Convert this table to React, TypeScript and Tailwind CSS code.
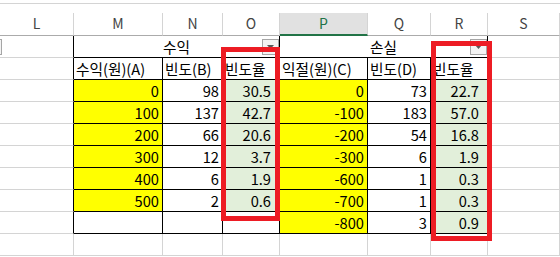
import React from 'react';

type Align = 'l' | 'r' | 'rp' | 'c';

type Cell = {
  t?: string;
  span?: 1 | 3;
  bg?: string;
  align?: Align;
  b?: boolean;
  dd?: 'right' | 'sliver';
};

const Y = 'bg-[#ffff00]';
const G = 'bg-[#e2efda]';

const letters = ['L', 'M', 'N', 'O', 'P', 'Q', 'R', 'S'];

const mRows: string[] = ['0', '100', '200', '300', '400', '500'];
const nRows: string[] = ['98', '137', '66', '12', '6', '2'];
const oRows: string[] = ['30.5', '42.7', '20.6', '3.7', '1.9', '0.6'];
const pRows: string[] = ['0', '-100', '-200', '-300', '-600', '-700'];
const qRows: string[] = ['73', '183', '54', '6', '1', '1'];
const rRows: string[] = ['22.7', '57.0', '16.8', '1.9', '0.3', '0.3'];

const rows: Cell[][] = [
  [
    { dd: 'sliver' },
    { t: '수익', span: 3, align: 'c', b: true, dd: 'right' },
    { t: '손실', span: 3, align: 'c', b: true, dd: 'right' },
    {},
  ],
  [
    {},
    { t: '수익(원)(A)', align: 'l', b: true },
    { t: '빈도(B)', align: 'l', b: true },
    { t: '빈도율', align: 'l', b: true },
    { t: '익절(원)(C)', align: 'l', b: true },
    { t: '빈도(D)', align: 'l', b: true },
    { t: '빈도율', align: 'l', b: true },
    {},
  ],
  ...mRows.map((_, i): Cell[] => [
    {},
    { t: mRows[i], align: 'r', b: true, bg: Y },
    { t: nRows[i], align: 'r', b: true },
    { t: oRows[i], align: 'rp', b: true, bg: G },
    { t: pRows[i], align: 'r', b: true, bg: Y },
    { t: qRows[i], align: 'r', b: true },
    { t: rRows[i], align: 'rp', b: true, bg: G },
    {},
  ]),
  [
    {},
    { b: true },
    { b: true },
    { b: true },
    { t: '-800', align: 'r', b: true, bg: Y },
    { t: '3', align: 'r', b: true },
    { t: '0.9', align: 'rp', b: true, bg: G },
    {},
  ],
  [{}, {}, {}, {}, {}, {}, {}, {}],
];

function startCols(row: Cell[]): number[] {
  const out: number[] = [];
  let c = 0;
  for (const cell of row) {
    out.push(c);
    c += cell.span ?? 1;
  }
  return out;
}

function cellAt(row: Cell[] | undefined, col: number): Cell | undefined {
  if (!row) return undefined;
  const s = startCols(row);
  for (let i = 0; i < row.length; i++) {
    if (col >= s[i] && col < s[i] + (row[i].span ?? 1)) return row[i];
  }
  return undefined;
}

function Dropdown() {
  return (
    <div className="absolute right-0 top-[3px] w-[17px] h-[16px] border border-[#a6a6a6] bg-[#f3f3f3] flex items-center justify-center">
      <svg width="7" height="4" viewBox="0 0 7 4">
        <path d="M0 0h7L3.5 4z" fill="#595959" />
      </svg>
    </div>
  );
}

function Sliver() {
  return (
    <div className="absolute left-[-15px] top-[3px] w-[17px] h-[16px] border border-[#a6a6a6] bg-[#f3f3f3]" />
  );
}

const alignCls: Record<Align, string> = {
  l: 'justify-start pl-[2px]',
  r: 'justify-end pr-[3px]',
  rp: 'justify-end pr-[8px]',
  c: 'justify-center',
};

export default function App() {
  return (
    <div className="relative w-[560px] h-[257px] overflow-hidden bg-white font-['Noto_Sans_CJK_KR',sans-serif] text-black">
      <div className="h-[3px]" />
      <div className="h-px bg-[#d4d4d4]" />
      <div className="h-[9px]" />
      {/* column header */}
      <div className="grid grid-cols-[74px_89px_60px_57px_88px_63px_57px_72px]">
        {letters.map((l) =>
          l === 'P' ? (
            <div
              key={l}
              className="h-[23px] border-r border-r-[#d4d4d4] border-b-2 border-b-[#217346] bg-[#e1e1e1] flex items-center justify-center text-[14px] leading-[20px] text-[#217346] pb-[2px]"
            >
              {l}
            </div>
          ) : (
            <div
              key={l}
              className="h-[23px] border-r border-r-[#d4d4d4] border-b border-b-[#ababab] flex items-center justify-center text-[14px] leading-[20px] text-[#444444] pb-[2px]"
            >
              {l}
            </div>
          )
        )}
      </div>
      {/* body */}
      <div className="grid grid-cols-[74px_89px_60px_57px_88px_63px_57px_72px]">
        {rows.map((row, r) => {
          const s = startCols(row);
          return row.map((cell, i) => {
            const next = row[i + 1];
            const below = cellAt(rows[r + 1], s[i]);
            const rightBlack = !!cell.b || !!(next && next.b);
            const bottomBlack = !!cell.b || !!(below && below.b);
            const cls = [
              'relative h-[22px] border-r border-b text-[14.67px] leading-[21px] whitespace-nowrap flex items-center',
              cell.span === 3 ? 'col-span-3' : 'col-span-1',
              rightBlack ? 'border-r-black' : 'border-r-[#d4d4d4]',
              bottomBlack ? 'border-b-black' : 'border-b-[#d4d4d4]',
              cell.bg ?? 'bg-white',
              alignCls[cell.align ?? 'l'],
            ].join(' ');
            return (
              <div key={`${r}-${i}`} className={cls}>
                {cell.dd === 'sliver' && <Sliver />}
                <span>{cell.t ?? ''}</span>
                {cell.dd === 'right' && <Dropdown />}
              </div>
            );
          });
        })}
      </div>
      {/* red highlight boxes */}
      <div className="absolute left-[221px] top-[47px] w-[59px] h-[174px] border-[5px] border-[#ed1c24]" />
      <div className="absolute left-[431px] top-[41px] w-[61px] h-[200px] border-[5px] border-[#ed1c24]" />
    </div>
  );
}
